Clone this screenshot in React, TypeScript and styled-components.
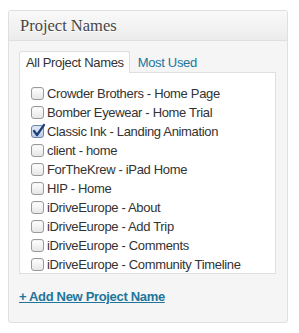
import * as React from 'react';
import styled, { createGlobalStyle } from 'styled-components';

const Global = createGlobalStyle`
  body {
    margin: 0;
    background: #fff;
    font-family: "Liberation Sans", Arial, sans-serif;
  }
`;

const Box = styled.div`
  margin: 10px 0 0 8px;
  width: 278px;
  height: 311px;
  border: 1px solid #dfdfdf;
  border-radius: 3px;
  background: #f5f5f5;
  box-shadow: inset 0 1px 0 #fff;
`;

const Header = styled.div`
  height: 29px;
  border-bottom: 1px solid #dfdfdf;
  background: linear-gradient(to bottom, #f9f9f9, #ececec);
  border-radius: 3px 3px 0 0;
  padding-left: 11px;
  display: flex;
  align-items: center;
`;

const Title = styled.h3`
  margin: 0;
  font-family: "Liberation Serif", Georgia, serif;
  font-weight: normal;
  font-size: 16.5px;
  color: #464646;
  text-shadow: 0 1px 0 #fff;
`;

const Inside = styled.div`
  padding: 9px 11px 0 10px;
  letter-spacing: -0.33px;
`;

const Tabs = styled.div`
  display: flex;
  align-items: flex-end;
  height: 22px;
`;

const Tab = styled.div<{ $active?: boolean }>`
  height: 21px;
  padding: 0 5px 0 6px;
  display: flex;
  align-items: center;
  font-size: 13px;
  margin-right: 1px;
  border: 1px solid ${({ $active }) => ($active ? '#dfdfdf' : 'transparent')};
  border-bottom: none;
  border-radius: 3px 3px 0 0;
  background: ${({ $active }) => ($active ? '#fff' : 'transparent')};
  color: ${({ $active }) => ($active ? '#333' : '#21759b')};
  position: relative;
  bottom: -1px;
`;

const Panel = styled.div`
  border: 1px solid #dfdfdf;
  background: #fff;
  padding: 11px 0 0 11px;
  box-sizing: border-box;
  height: 202px;
  overflow: hidden;
`;

const List = styled.ul`
  list-style: none;
  margin: 0;
  padding: 0;
`;

const Row = styled.li`
  height: 19px;
  display: flex;
  align-items: center;
  font-size: 13px;
  color: #333;
  white-space: nowrap;
`;

const Check = styled.span<{ $checked?: boolean }>`
  position: relative;
  width: 11px;
  height: 11px;
  margin-right: 3px;
  border: 1px solid ${({ $checked }) => ($checked ? '#6f86a8' : '#9a9a9a')};
  border-radius: 3px;
  background: ${({ $checked }) =>
    $checked ? 'linear-gradient(to bottom, #e4edf9, #b9cbe6)' : 'linear-gradient(to bottom, #ffffff, #e6e6e6)'};
  box-shadow: inset 0 1px 1px rgba(0, 0, 0, 0.05);
  flex: none;
`;

const Tick = styled.svg`
  position: absolute;
  left: 0px;
  top: -3px;
`;

const AddLink = styled.a`
  display: inline-block;
  margin-top: 15px;
  font-size: 13px;
  font-weight: bold;
  color: #21759b;
  text-decoration: underline;
`;

const items = [
  'Crowder Brothers - Home Page',
  'Bomber Eyewear - Home Trial',
  'Classic Ink - Landing Animation',
  'client - home',
  'ForTheKrew - iPad Home',
  'HIP - Home',
  'iDriveEurope - About',
  'iDriveEurope - Add Trip',
  'iDriveEurope - Comments',
  'iDriveEurope - Community Timeline',
];

const App = () => (
  <>
    <Global />
    <Box>
      <Header>
        <Title>Project Names</Title>
      </Header>
      <Inside>
        <Tabs>
          <Tab $active>All Project Names</Tab>
          <Tab>Most Used</Tab>
        </Tabs>
        <Panel>
          <List>
            {items.map((name, i) => (
              <Row key={name}>
                <Check $checked={i === 2}>
                  {i === 2 && (
                    <Tick width="14" height="15" viewBox="0 0 14 15">
                      <path d="M2 8 L5 12 L12 2" fill="none" stroke="#1f3f78" strokeWidth="2.2" strokeLinecap="round" strokeLinejoin="round" />
                    </Tick>
                  )}
                </Check>
                {name}
              </Row>
            ))}
          </List>
        </Panel>
        <AddLink href="#">+ Add New Project Name</AddLink>
      </Inside>
    </Box>
  </>
);

export default App;
